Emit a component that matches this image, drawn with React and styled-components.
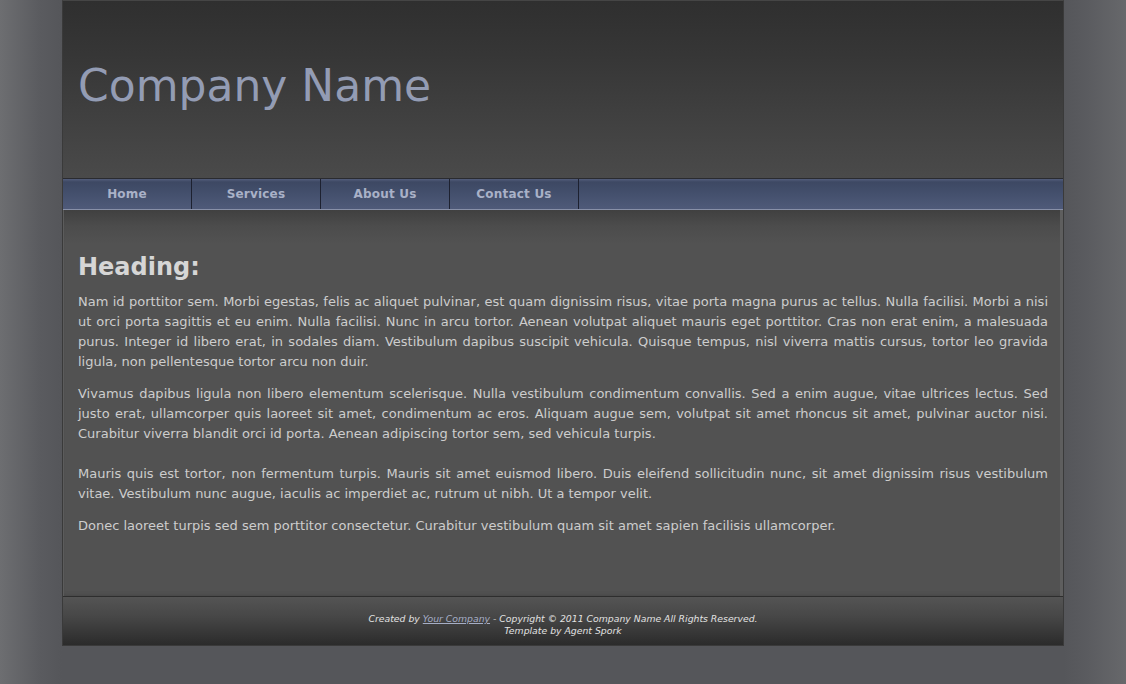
import React from "react";
import styled, { createGlobalStyle } from "styled-components";

const Global = createGlobalStyle`
  html, body { margin: 0; padding: 0; }
  body {
    min-height: 100vh;
    background: linear-gradient(to right, #6d6e71 0px, #5a5b5f 40px, #55565a 62px, #55565a calc(100% - 62px), #5a5b5f calc(100% - 40px), #67686b 100%);
    font-family: "DejaVu Sans", Verdana, sans-serif;
  }
`;

const Page = styled.div`
  width: 1000px;
  margin: 0 auto;
  border: 1px solid #3a3a3a;
  border-top-color: #454545;
`;

const Header = styled.header`
  height: 177px;
  box-sizing: border-box;
  padding: 63px 15px 0;
  background: linear-gradient(to bottom, #2f2f2f 0%, #363636 30%, #4a4a4a 100%);
`;

const Title = styled.h1`
  margin: 0;
  font-family: "DejaVu Sans", Verdana, sans-serif;
  font-weight: normal;
  font-size: 44px;
  line-height: 44px;
  color: #939cb4;
`;

const Nav = styled.nav`
  display: flex;
  height: 30px;
  border-top: 1px solid #2a2b30;
  border-bottom: 1px solid #8890a8;
  background: linear-gradient(to bottom, #535d7b 0px, #3d4863 3px, #44506d 50%, #4f5a79 100%);
`;

const NavItem = styled.a`
  width: 128px;
  border-right: 1px solid #1d2130;
  display: flex;
  align-items: center;
  justify-content: center;
  font-size: 12px;
  font-weight: bold;
  color: #a9b1c7;
  text-decoration: none;
  letter-spacing: 0.2px;
`;

const Content = styled.main`
  height: 386px;
  box-sizing: border-box;
  padding: 43px 15px 0;
  background: linear-gradient(to bottom, #404040 0px, #4c4c4c 16px, #525252 34px, #525252 100%);
  box-shadow: inset 1px 0 0 #5c5c5c, inset -3px 0 0 #5e5e5e, inset 0 -3px 4px -2px #474747;
`;

const Heading = styled.h2`
  margin: 0 0 11px;
  font-size: 24px;
  line-height: 28px;
  font-weight: bold;
  color: #d6d6d6;
`;

const Para = styled.p`
  margin: ${(p) => (p.$extra ? "20px" : "12px")} 0 0;
  font-size: 13px;
  line-height: 20px;
  color: #cdcdcd;
  text-align: justify;
  &:first-of-type { margin-top: 0; }
`;

const Footer = styled.footer`
  height: 49px;
  box-sizing: border-box;
  padding-top: 16px;
  border-top: 1px solid #2e2e2e;
  background: linear-gradient(to bottom, #545454 0%, #474747 40%, #2b2b2b 100%);
  text-align: center;
  font-size: 9.3px;
  line-height: 12px;
  font-style: italic;
  color: #e2e2e2;
`;

const FooterLink = styled.a`
  color: #a6aec6;
  text-decoration: underline;
`;

export default function App() {
  return (
    <>
      <Global />
      <Page>
        <Header>
          <Title>Company Name</Title>
        </Header>
        <Nav>
          <NavItem href="#">Home</NavItem>
          <NavItem href="#">Services</NavItem>
          <NavItem href="#">About Us</NavItem>
          <NavItem href="#">Contact Us</NavItem>
        </Nav>
        <Content>
          <Heading>Heading:</Heading>
          <Para>
            Nam id porttitor sem. Morbi egestas, felis ac aliquet pulvinar, est quam dignissim risus, vitae porta magna purus ac tellus. Nulla facilisi. Morbi a nisi ut orci porta sagittis et eu enim. Nulla facilisi. Nunc in arcu tortor. Aenean volutpat aliquet mauris eget porttitor. Cras non erat enim, a malesuada purus. Integer id libero erat, in sodales diam. Vestibulum dapibus suscipit vehicula. Quisque tempus, nisl viverra mattis cursus, tortor leo gravida ligula, non pellentesque tortor arcu non duir.
          </Para>
          <Para>
            Vivamus dapibus ligula non libero elementum scelerisque. Nulla vestibulum condimentum convallis. Sed a enim augue, vitae ultrices lectus. Sed justo erat, ullamcorper quis laoreet sit amet, condimentum ac eros. Aliquam augue sem, volutpat sit amet rhoncus sit amet, pulvinar auctor nisi. Curabitur viverra blandit orci id porta. Aenean adipiscing tortor sem, sed vehicula turpis.
          </Para>
          <Para $extra>
            Mauris quis est tortor, non fermentum turpis. Mauris sit amet euismod libero. Duis eleifend sollicitudin nunc, sit amet dignissim risus vestibulum vitae. Vestibulum nunc augue, iaculis ac imperdiet ac, rutrum ut nibh. Ut a tempor velit.
          </Para>
          <Para>
            Donec laoreet turpis sed sem porttitor consectetur. Curabitur vestibulum quam sit amet sapien facilisis ullamcorper.
          </Para>
        </Content>
        <Footer>
          Created by <FooterLink href="#">Your Company</FooterLink> - Copyright © 2011 Company Name All Rights Reserved.
          <br />
          Template by Agent Spork
        </Footer>
      </Page>
    </>
  );
}
